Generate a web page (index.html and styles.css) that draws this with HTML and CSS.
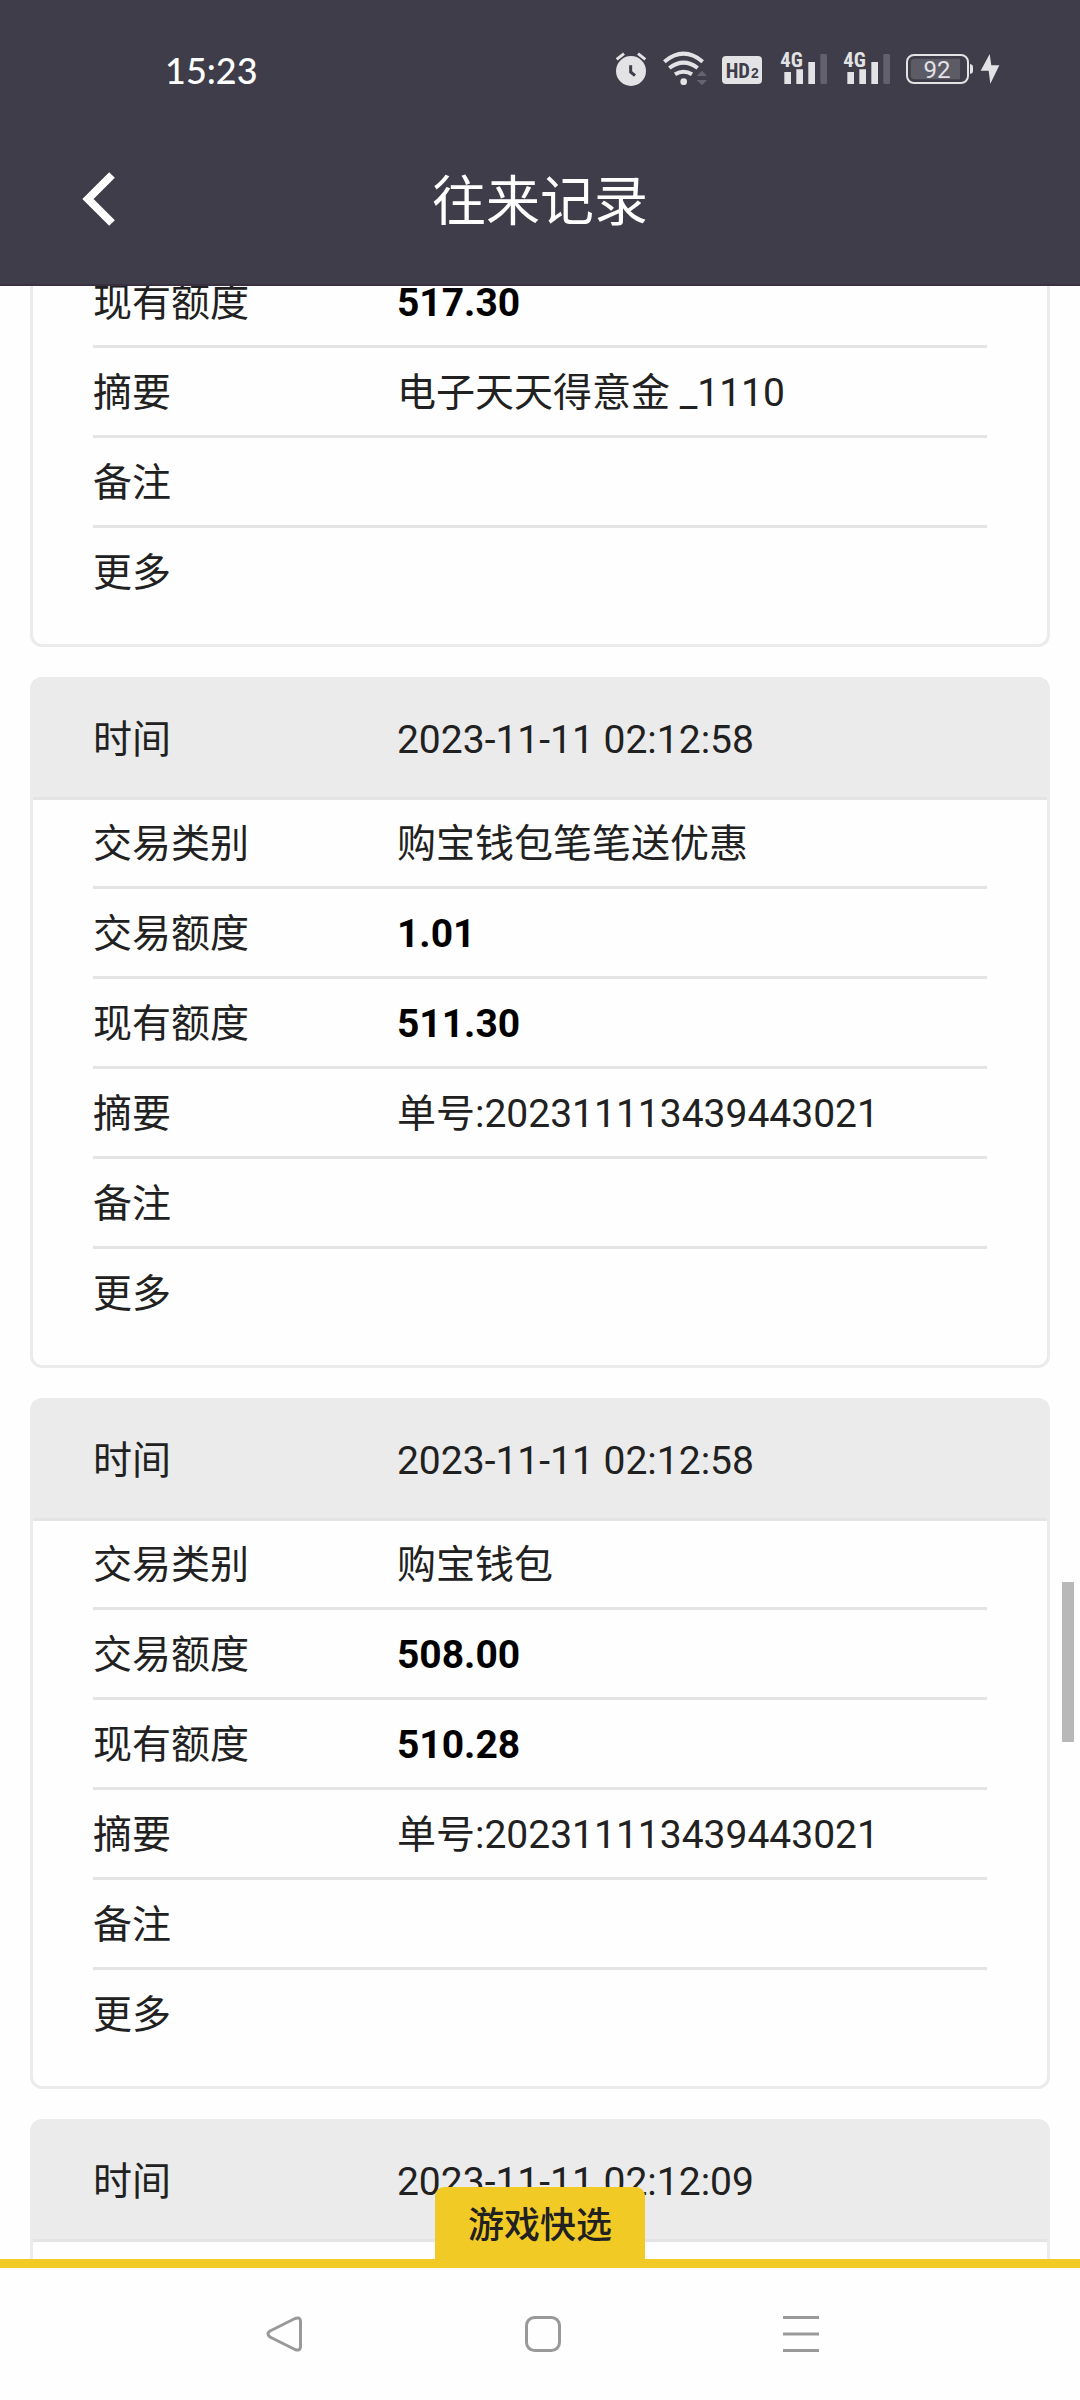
FILE: index.html
```html
<!DOCTYPE html>
<html lang="zh-CN">
<head>
<meta charset="utf-8">
<meta name="viewport" content="width=device-width, initial-scale=1">
<title>往来记录</title>
<link rel="stylesheet" href="styles.css">
</head>
<body>
<div class="app">
  <header class="top">
    <div class="status">
      <time class="clock">15:23</time>
      <div class="status-icons">
        <svg width="33" height="40" viewBox="72 60 99 120" aria-hidden="true">
          <circle cx="123" cy="123" r="45" fill="#e3e3e6"/>
          <path d="M80 88 102 71M166 88 144 71" stroke="#e3e3e6" stroke-width="9" fill="none"/>
          <path d="M122 106v20l13 11" stroke="#3e3d49" stroke-width="9" fill="none"/>
        </svg>
        <svg width="45" height="40" viewBox="216 60 135 120" aria-hidden="true">
          <g fill="none" stroke="#e3e3e6" stroke-width="12">
            <path d="M223 95Q281 47 338 95"/>
            <path d="M238 114Q281 82 323 114"/>
            <path d="M255 133Q281 118 306 133"/>
          </g>
          <circle cx="281" cy="155" r="10" fill="#e3e3e6"/>
          <path d="M320 138 336 122 351 138ZM320 150H351L336 166Z" fill="#65646e"/>
        </svg>
        <svg width="43" height="40" viewBox="396 60 129 120" aria-label="HD2">
          <rect x="396" y="78" width="120" height="84" rx="12" fill="#e3e3e6"/>
          <text class="narrow" x="407" y="143" font-size="62" fill="#3e3d49">HD</text>
          <text class="wide" x="483" y="143" font-size="42" fill="#3e3d49">2</text>
        </svg>
        <svg width="48" height="40" viewBox="570 60 144 120" aria-label="4G">
          <text class="narrow" x="571" y="111" font-size="62" fill="#e3e3e6">4G</text>
          <path d="M583 126h20v36h-20zM619 118h20v44h-20zM655 96h20v66h-20z" fill="#e3e3e6"/>
          <rect x="691" y="72" width="20" height="90" rx="4" fill="#62616c"/>
        </svg>
        <svg width="48" height="40" viewBox="570 60 144 120" aria-label="4G">
          <text class="narrow" x="571" y="111" font-size="62" fill="#e3e3e6">4G</text>
          <path d="M583 126h20v36h-20zM619 118h20v44h-20zM655 96h20v66h-20z" fill="#e3e3e6"/>
          <rect x="691" y="72" width="20" height="90" rx="4" fill="#62616c"/>
        </svg>
        <svg width="95" height="40" viewBox="948 60 285 120" aria-label="92%">
          <rect x="951" y="75" width="183" height="84" rx="21" fill="none" stroke="#e3e3e6" stroke-width="6"/>
          <path d="M974 86H1110V148H974Q962 148 962 136V98Q962 86 974 86Z" fill="#5c5b66"/>
          <path d="M1140 102q9 2 9 9v12q0 7-9 9z" fill="#e3e3e6"/>
          <text class="level" x="1041" y="144" font-size="72" text-anchor="middle" fill="#e3e3e6">92</text>
          <path d="M1199 72 1172 122H1196L1201 161 1228 106H1204Z" fill="#e3e3e6"/>
        </svg>
      </div>
    </div>
    <div class="titlebar">
      <button class="back" type="button" aria-label="返回">
        <svg width="34" height="54" viewBox="0 0 34 54" aria-hidden="true"><path d="M30 3 6 27 30 51" fill="none" stroke="#fff" stroke-width="8"/></svg>
      </button>
      <h1 class="title">往来记录</h1>
    </div>
  </header>

  <main class="feed">
    <div class="list">
      <article class="card card-cut">
        <dl class="rows">
          <div class="row"><dt>现有额度</dt><dd class="amount">517.30</dd></div>
          <div class="row"><dt>摘要</dt><dd>电子天天得意金 _1110</dd></div>
          <div class="row"><dt>备注</dt><dd></dd></div>
          <div class="row"><dt>更多</dt><dd></dd></div>
        </dl>
      </article>

      <article class="card">
        <dl class="head"><dt>时间</dt><dd>2023-11-11 02:12:58</dd></dl>
        <dl class="rows">
          <div class="row"><dt>交易类别</dt><dd>购宝钱包笔笔送优惠</dd></div>
          <div class="row"><dt>交易额度</dt><dd class="amount">1.01</dd></div>
          <div class="row"><dt>现有额度</dt><dd class="amount">511.30</dd></div>
          <div class="row"><dt>摘要</dt><dd>单号:202311113439443021</dd></div>
          <div class="row"><dt>备注</dt><dd></dd></div>
          <div class="row"><dt>更多</dt><dd></dd></div>
        </dl>
      </article>

      <article class="card">
        <dl class="head"><dt>时间</dt><dd>2023-11-11 02:12:58</dd></dl>
        <dl class="rows">
          <div class="row"><dt>交易类别</dt><dd>购宝钱包</dd></div>
          <div class="row"><dt>交易额度</dt><dd class="amount">508.00</dd></div>
          <div class="row"><dt>现有额度</dt><dd class="amount">510.28</dd></div>
          <div class="row"><dt>摘要</dt><dd>单号:202311113439443021</dd></div>
          <div class="row"><dt>备注</dt><dd></dd></div>
          <div class="row"><dt>更多</dt><dd></dd></div>
        </dl>
      </article>

      <article class="card">
        <dl class="head"><dt>时间</dt><dd>2023-11-11 02:12:09</dd></dl>
        <dl class="rows"></dl>
      </article>
    </div>
    <div class="scroll-thumb"></div>
    <button class="quick" type="button">游戏快选</button>
  </main>

  <nav class="sysnav">
    <button type="button" aria-label="返回">
      <svg width="36" height="36" viewBox="0 0 36 36" aria-hidden="true"><path d="M3 15 28 2.500Q33 .5 33.500 5V31Q33 35.500 28 33.500L3 21Q-1 18 3 15Z" fill="none" stroke="#999" stroke-width="3"/></svg>
    </button>
    <button type="button" aria-label="主页">
      <svg width="36" height="36" viewBox="0 0 36 36" aria-hidden="true"><rect x="1.500" y="1.500" width="33" height="33" rx="8" fill="none" stroke="#999" stroke-width="3"/></svg>
    </button>
    <button type="button" aria-label="最近任务">
      <svg width="36" height="36" viewBox="0 0 36 36" aria-hidden="true"><path d="M0 1.500H36M0 18H36M0 34.500H36" stroke="#999" stroke-width="3"/></svg>
    </button>
  </nav>
</div>
</body>
</html>
```
FILE: styles.css
```css
* {
  box-sizing: border-box;
}

body {
  margin: 0;
  background: #fefefe;
  color: #212121;
  font-family: Roboto, "Noto Sans CJK SC", sans-serif;
  font-size: 39px;
  line-height: 48px;
}

button {
  margin: 0;
  padding: 0;
  border: 0;
  background: none;
  color: inherit;
  font: inherit;
}

svg {
  display: block;
  overflow: visible;
}

.app {
  display: flex;
  flex-direction: column;
  height: 100vh;
}

/* Status bar and title */
.top {
  flex: none;
  background: #3e3d49;
  border-bottom: 2px solid #3a3042;
  color: #fff;
}

.status {
  display: flex;
  align-items: center;
  justify-content: space-between;
  height: 140px;
  padding: 0 79px 0 165px;
}

.clock {
  font-family: Lato, sans-serif;
  font-size: 36px;
  font-weight: 500;
  line-height: 40px;
}

.status-icons {
  display: flex;
  gap: 15px;
}

.narrow {
  font-family: "Liberation Sans Narrow", "Roboto Condensed", "Liberation Sans", sans-serif;
  font-weight: 700;
}

.wide {
  font-family: "Liberation Sans", sans-serif;
  font-weight: 700;
}

.level {
  font-family: Roboto, sans-serif;
}

.titlebar {
  display: grid;
  grid-template-columns: 116px 1fr 116px;
  align-items: center;
  height: 144px;
  padding-bottom: 26px;
}

.back {
  justify-self: end;
}

.title {
  margin: 0;
  padding-top: 8px;
  font-size: 54px;
  font-weight: 400;
  line-height: 64px;
  text-align: center;
}

/* Record list */
.feed {
  position: relative;
  flex: 1;
  min-height: 0;
  overflow: hidden;
}

.list {
  display: flex;
  flex-direction: column;
  gap: 30px;
  padding: 0 30px;
}

.card {
  border: 3px solid #ebebeb;
  border-radius: 12px;
}

/* The list is scrolled part of the way through this record */
.card-cut {
  margin-top: -28px;
  border-top: 0;
}

dl,
dd {
  margin: 0;
}

.head,
.row {
  display: grid;
  grid-template-columns: 34% 1fr;
  align-items: center;
  padding-top: 2px;
}

.head {
  height: 120px;
  padding: 2px 60px 0;
  background: #ebebeb;
  border-bottom: 3px solid #e4e4e4;
}

.rows {
  min-height: 60px;
  padding: 0 60px 29px;
}

.row {
  height: 90px;
  border-bottom: 3px solid #e4e4e4;
}

.head + .rows .row:first-child {
  height: 89px;
}

.row:last-child {
  height: 87px;
  border-bottom: 0;
}

.amount {
  color: #000;
  font-weight: 700;
}

.scroll-thumb {
  position: absolute;
  top: 1296px;
  right: 6px;
  width: 12px;
  height: 160px;
  background: #b8b8b8;
}

.quick {
  position: absolute;
  bottom: 0;
  left: 50%;
  width: 210px;
  height: 72px;
  margin-left: -105px;
  padding-top: 6px;
  border-radius: 9px 9px 0 0;
  background: #f2ca26;
  font-size: 36px;
  font-weight: 500;
}

/* System navigation */
.sysnav {
  display: grid;
  flex: none;
  grid-template-columns: repeat(3, 1fr);
  place-items: center;
  height: 141px;
  padding: 0 150px 0 156px;
  border-top: 9px solid #f2ca26;
}
```
